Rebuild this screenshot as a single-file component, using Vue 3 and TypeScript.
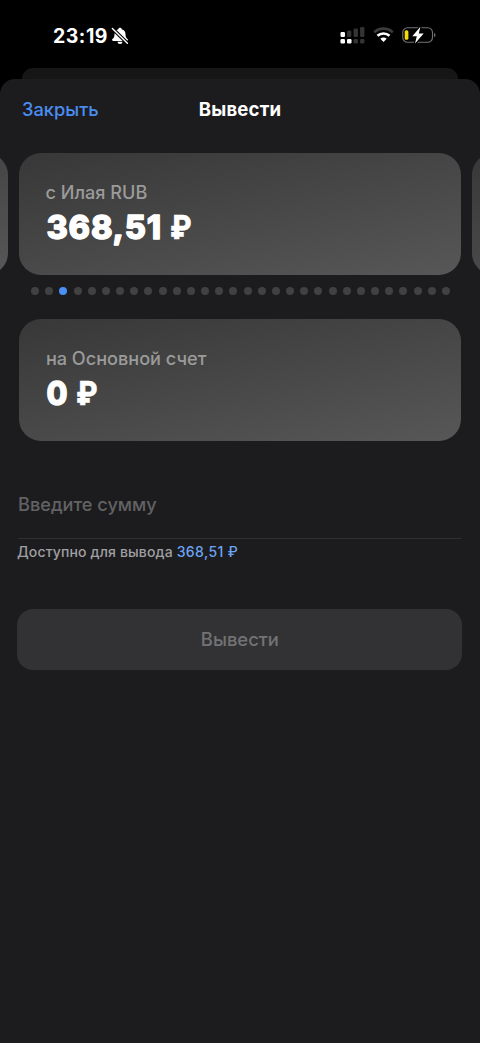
<script setup lang="ts">
interface Account {
  id: number
  label: string
  amount: string
}

const carousel: Account[] = [
  { id: 1, label: '', amount: '' },
  { id: 2, label: 'с Илая RUB', amount: '368,51' },
  { id: 3, label: '', amount: '' },
]
const dotCount = 30
const activeDot = 3
</script>

<template>
  <div class="screen">
    <header class="status">
      <span class="time">23:19</span>
      <svg class="bell" width="18" height="18" viewBox="0 0 18 18">
        <path d="M9 .8c-1 0-1.600.6-1.700 1.400C4.800 2.900 3.500 4.700 3.500 7.200c0 2.600-.7 3.700-2.100 4.900-.7.700-.3 1.800.7 1.800h13.800c1 0 1.400-1.100.7-1.800-1.400-1.200-2.100-2.300-2.100-4.900 0-2.500-1.300-4.300-3.800-5C10.600 1.400 10 .8 9 .8zM6.500 14.800a2.500 2.200 0 0 0 5 0z" fill="#fff" />
        <path d="M1.400 1.500L16.400 16.300" stroke="#000" stroke-width="3.600" />
        <path d="M1.400 1.500L16.400 16.300" stroke="#fff" stroke-width="1.400" stroke-linecap="round" />
      </svg>
      <svg class="signal" width="25" height="17" viewBox="0 0 25 17">
        <g fill="#fff">
          <rect x="0.500" y="5" width="4.500" height="5" rx="1.200" />
          <rect x="0.500" y="12" width="4.500" height="4.500" rx="1.200" />
          <rect x="7" y="12" width="4.500" height="4.500" rx="1.200" />
        </g>
        <g fill="#343434">
          <rect x="7" y="3.500" width="4.300" height="6.500" rx="1.200" />
          <rect x="13.600" y="1.500" width="4.300" height="8.500" rx="1.200" />
          <rect x="20.100" y="0" width="4.300" height="10" rx="1.200" />
          <rect x="13.600" y="12" width="4.300" height="4.500" rx="1.200" />
          <rect x="20.100" y="12" width="4.300" height="4.500" rx="1.200" />
        </g>
      </svg>
      <svg class="wifi" width="21" height="16" viewBox="0 0 21 16">
        <g fill="none" stroke-width="2.700">
          <path d="M1.200 5.400C6.400.4 14.600.4 19.800 5.400" stroke="#3b3b3b" />
          <path d="M4.500 8.800C7.900 5.700 13.100 5.700 16.500 8.800" stroke="#fff" />
        </g>
        <path d="M7.300 11.700C9.100 10.100 11.900 10.100 13.700 11.700L10.500 15z" fill="#fff" />
      </svg>
      <svg class="battery" width="35" height="18" viewBox="0 0 35 18">
        <rect x="0.800" y="1.700" width="29.700" height="14.600" rx="4.700" fill="none" stroke="#747474" stroke-width="1.100" />
        <path d="M32.100 6.700c1.900.8 1.900 3.800 0 4.600z" fill="#747474" />
        <rect x="2.700" y="4.200" width="3.700" height="9.600" rx="1.500" fill="#f6d90e" />
        <path d="M18.400 0.800L10.300 10.300h4.500l-1.800 7.200 8.700-9.900h-4.900z" fill="#fff" stroke="#000" stroke-width="2.600" stroke-linejoin="round" paint-order="stroke" />
      </svg>
    </header>
    <div class="behind"></div>
    <main class="sheet">
      <nav class="nav">
        <a class="close">Закрыть</a>
        <h1 class="title">Вывести</h1>
      </nav>
      <div class="carousel">
        <section v-for="card in carousel" :key="card.id" class="card">
          <p v-if="card.label" class="label">{{ card.label }}</p>
          <svg v-if="card.amount" class="amount" width="160" height="38">
            <text x="0.500" y="29.500" textLength="114.500">{{ card.amount }}</text>
            <text class="ruble" x="124" y="29.500" textLength="21.500" lengthAdjust="spacingAndGlyphs">₽</text>
          </svg>
        </section>
      </div>
      <div class="dots">
        <i v-for="n in dotCount" :key="n" class="dot" :class="{ active: n === activeDot }"></i>
      </div>
      <section class="card target">
        <p class="label">на Основной счет</p>
        <svg class="amount" width="160" height="38">
          <text x="0.500" y="29.500" textLength="21" lengthAdjust="spacingAndGlyphs">0</text>
          <text class="ruble" x="30" y="29.500" textLength="21.500" lengthAdjust="spacingAndGlyphs">₽</text>
        </svg>
      </section>
      <div class="field">Введите сумму</div>
      <p class="hint">Доступно для вывода <span class="sum">368,51 ₽</span></p>
      <button class="submit" type="button" disabled>Вывести</button>
    </main>
  </div>
</template>

<style>
body {
  background: #000;
}
</style>

<style scoped>
.screen {
  width: 480px;
  height: 1043px;
  overflow: hidden;
  background: #000;
  font-family: Inter, "Liberation Sans", sans-serif;
  color: #fff;
}
p, h1 {
  margin: 0;
}
.status {
  display: flex;
  height: 68px;
  box-sizing: border-box;
  padding: 26px 0 0 53px;
}
.time {
  width: 58px;
  font-size: 19.5px;
  font-weight: 700;
  line-height: 20px;
  letter-spacing: 0.5px;
  white-space: nowrap;
}
.bell {
  margin-top: 1px;
}
.signal {
  margin: 1px 0 0 211px;
}
.wifi {
  margin: 1px 0 0 8px;
}
.battery {
  margin-left: 8px;
}
.behind {
  height: 25px;
  margin: 0 22px;
  background: #161617;
  border-radius: 11px 11px 0 0;
}
.sheet {
  position: relative;
  height: 964px;
  margin-top: -14px;
  background: #1c1c1e;
  border-radius: 15px 15px 0 0;
  overflow: hidden;
}
.nav {
  display: grid;
  grid-template-columns: 1fr auto 1fr;
  align-items: center;
  height: 74px;
  box-sizing: border-box;
  padding: 0 22px 14px;
}
.close {
  color: #4a8df0;
  font-size: 18.3px;
  font-weight: 500;
  line-height: 24px;
}
.title {
  font-size: 18.6px;
  font-weight: 700;
  line-height: 24px;
  letter-spacing: 0.15px;
}
.carousel {
  display: flex;
  gap: 11px;
  margin-left: -433.5px;
}
.card {
  flex: none;
  width: 441.5px;
  height: 122px;
  box-sizing: border-box;
  padding: 27px 26.500px 0;
  border-radius: 22px;
  background: linear-gradient(168deg, #393939 5%, #575757 100%);
}
.label {
  color: #9b9b9b;
  font-size: 18.1px;
  font-weight: 500;
  line-height: 24px;
}
.amount {
  display: block;
  margin-top: 5px;
  overflow: visible;
  fill: #fff;
  stroke: #fff;
  stroke-width: 1.3px;
  stroke-linejoin: round;
  font-size: 32.5px;
  font-weight: 800;
}
.ruble {
  stroke-width: 0.4px;
}
.dots {
  display: flex;
  justify-content: space-between;
  margin: 12px 30px 0 31px;
}
.dot {
  width: 8px;
  height: 8px;
  border-radius: 50%;
  background: #414143;
}
.dot.active {
  background: #4b8ff5;
}
.target {
  margin: 24px 0 0 19.4px;
}
.field {
  height: 98px;
  box-sizing: border-box;
  margin: 0 19px 0 18px;
  padding-top: 51px;
  border-bottom: 1px solid #303032;
  color: #626264;
  font-size: 18.15px;
  font-weight: 500;
  line-height: 24px;
}
.hint {
  margin: 3px 0 0 17px;
  color: #a0a0a3;
  font-size: 14px;
  font-weight: 500;
  line-height: 20px;
  letter-spacing: 0.15px;
}
.sum {
  color: #6ca4f5;
  letter-spacing: 0.4px;
}
.submit {
  display: block;
  width: 445px;
  height: 61px;
  margin: 46.5px 0 0 17.4px;
  padding: 0 0 1px;
  border: 0;
  border-radius: 16px;
  background: #323234;
  color: #727274;
  font: 500 18.4px/24px Inter, "Liberation Sans", sans-serif;
}
</style>
